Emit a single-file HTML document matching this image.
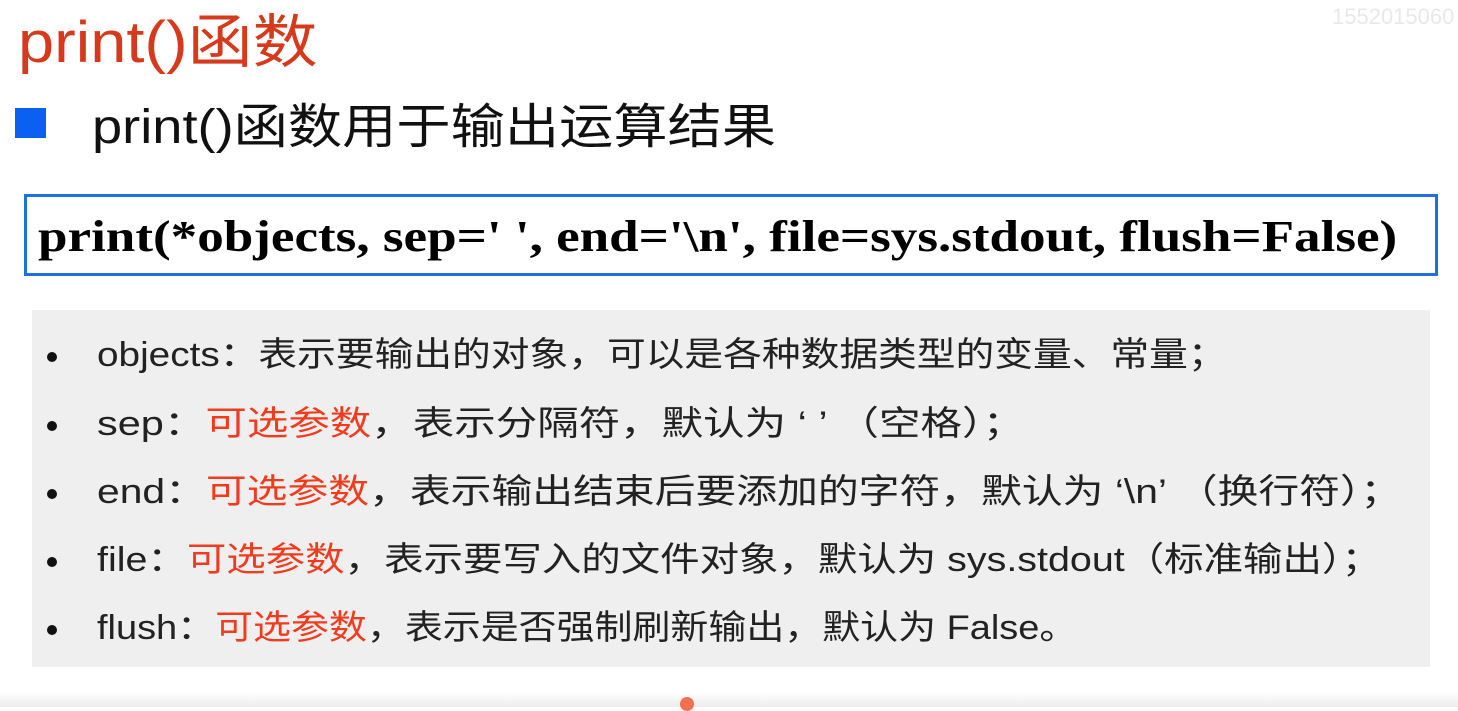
<!DOCTYPE html>
<html><head><meta charset="utf-8"><style>
body{margin:0;width:1458px;height:707px;background:#fff;position:relative;overflow:hidden;font-family:"Liberation Sans","Noto Sans CJK SC",sans-serif;}
.a{position:absolute;white-space:nowrap;transform-origin:0 50%;}
.r{color:#f03c1e;}
.li{position:absolute;left:97px;font-size:34px;color:#222;white-space:nowrap;line-height:40px;transform-origin:0 50%;}
.dot{position:absolute;left:47px;width:10px;height:10px;border-radius:50%;background:#111;}
</style></head><body>
<div class="a" style="left:18px;top:8px;font-size:58px;color:#d63a1c;line-height:70px;transform:scaleX(1.12);">print()函数</div>
<div class="a" style="left:1332px;top:4px;font-size:22px;color:#e8e8e8;">1552015060</div>
<div class="a" style="left:15px;top:108px;width:31px;height:30px;background:#0a60f0;"></div>
<div class="a" style="left:92px;top:98px;font-size:48px;color:#111;line-height:60px;transform:scaleX(1.13);">print()函数用于输出运算结果</div>
<div class="a" style="left:24px;top:194px;width:1408px;height:76px;border:3px solid #1e70e0;"></div>
<div class="a" style="left:38px;top:212px;font-family:'Liberation Serif',serif;font-weight:bold;font-size:44px;color:#000;line-height:50px;transform:scaleX(1.206);">print(*objects, sep=' ', end='\n', file=sys.stdout, flush=False)</div>
<div class="a" style="left:32px;top:310px;width:1398px;height:357px;background:#efefef;"></div>
<div class="dot" style="top:352px"></div><div class="li" style="top:335px;transform:scaleX(1.139)">objects：表示要输出的对象，可以是各种数据类型的变量、常量；</div>
<div class="dot" style="top:421px"></div><div class="li" style="top:404px;transform:scaleX(1.22)">sep：<span class="r">可选参数</span>，表示分隔符，默认为 ‘ ’ （空格）；</div>
<div class="dot" style="top:489px"></div><div class="li" style="top:472px;transform:scaleX(1.2)">end：<span class="r">可选参数</span>，表示输出结束后要添加的字符，默认为 ‘\n’ （换行符）；</div>
<div class="dot" style="top:557px"></div><div class="li" style="top:540px;transform:scaleX(1.16)">file：<span class="r">可选参数</span>，表示要写入的文件对象，默认为 sys.stdout（标准输出）；</div>
<div class="dot" style="top:625px"></div><div class="li" style="top:608px;transform:scaleX(1.116)">flush：<span class="r">可选参数</span>，表示是否强制刷新输出，默认为 False。</div>
<div class="a" style="left:0;top:692px;width:1458px;height:15px;background:linear-gradient(#fff,#ececec);"></div>
<div class="a" style="left:680px;top:697px;width:14px;height:14px;border-radius:50%;background:#f07050;"></div>
</body></html>
